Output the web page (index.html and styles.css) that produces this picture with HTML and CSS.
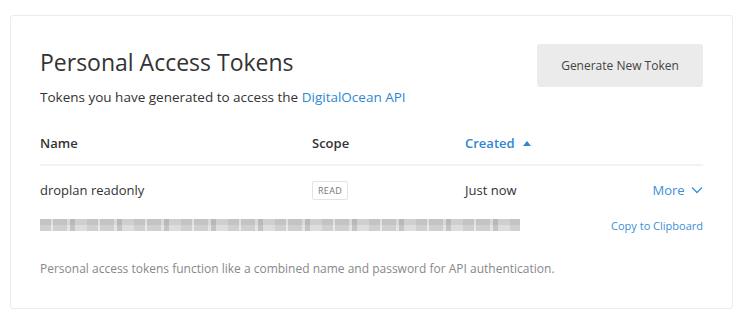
FILE: index.html
```html
<!DOCTYPE html>
<html>
<head>
    <title>Personal Access Tokens</title>
    <link rel="stylesheet" href="styles.css">
</head>
<body>
    <div class="card">
        <div class="header">
            <div>
                <h2>Personal Access Tokens</h2>
                <p class="lead">Tokens you have generated to access the <a href="#">DigitalOcean API</a></p>
            </div>
            <button class="generate">Generate New Token</button>
        </div>
        <div class="row head">
            <div>Name</div>
            <div>Scope</div>
            <div class="sorted">Created <span class="caret"></span></div>
            <div></div>
        </div>
        <div class="row token">
            <div>droplan readonly</div>
            <div><span class="badge">READ</span></div>
            <div>Just now</div>
            <div class="more">More
                <svg width="12" height="8" viewBox="0 0 12 8"><path d="M1 1.5 L6 6.5 L11 1.5" fill="none" stroke="#3a8fd6" stroke-width="1.3"/></svg>
            </div>
        </div>
        <div class="secret">
            <div class="blur"></div>
            <a href="#" class="copy">Copy to Clipboard</a>
        </div>
        <p class="note">Personal access tokens function like a combined name and password for API authentication.</p>
    </div>
</body>
</html>
```
FILE: styles.css
```css
body {
    margin: 0;
    padding: 15px 12px 10px 10px;
    font-family: "Open Sans", sans-serif;
    color: #333;
    background: #fff;
}
.card {
    height: 294px;
    box-sizing: border-box;
    border: 1px solid #ebebeb;
    border-radius: 3px;
    padding: 28px 29px 0 29px;
}
a {
    color: #2e87d3;
    text-decoration: none;
}
.header {
    display: flex;
    justify-content: space-between;
    align-items: flex-start;
}
h2 {
    margin: 3px 0 0 0;
    font-size: 23px;
    font-weight: 400;
    line-height: 30px;
    color: #333;
}
.lead {
    margin: 10px 0 0 0;
    font-size: 13.5px;
    line-height: 20px;
    color: #333;
}
.generate {
    width: 166px;
    height: 43px;
    border: none;
    border-radius: 3px;
    background: #ebebeb;
    color: #444;
    font-family: inherit;
    font-size: 12px;
    cursor: pointer;
}
.row {
    display: grid;
    grid-template-columns: 272px 153px 1fr 100px;
    align-items: center;
    font-size: 13px;
}
.head {
    margin-top: 15px;
    height: 42px;
    border-bottom: 2px solid #f2f2f2;
    font-weight: 600;
}
.sorted {
    color: #2e87d3;
}
.caret {
    display: inline-block;
    margin-left: 5px;
    vertical-align: 2px;
    border-left: 4px solid transparent;
    border-right: 4px solid transparent;
    border-bottom: 5px solid #2e87d3;
}
.token {
    height: 48px;
}
.badge {
    display: inline-block;
    border: 1px solid #e3e3e3;
    border-radius: 2px;
    padding: 3px 5px;
    font-size: 9px;
    line-height: 11px;
    letter-spacing: 0.3px;
    color: #777;
}
.more {
    text-align: right;
    color: #3a8fd6;
    font-size: 13px;
}
.more svg {
    margin-left: 3px;
    vertical-align: 1px;
}
.secret {
    display: flex;
    justify-content: space-between;
    align-items: center;
    height: 22px;
}
.blur {
    width: 480px;
    height: 12px;
    background:
        repeating-linear-gradient(90deg, rgba(110,110,110,0.12) 0 11px, rgba(255,255,255,0.35) 11px 13px, rgba(90,90,90,0.1) 13px 27px, rgba(255,255,255,0.2) 27px 30px, rgba(80,80,80,0.18) 30px 35px, rgba(255,255,255,0) 35px 47px),
        linear-gradient(#cfcfcf 0 50%, #dddddd 50% 100%);
}
.copy {
    font-size: 11px;
    color: #3a8fd6;
}
.note {
    margin: 24px 0 0 0;
    font-size: 12px;
    color: #888;
}
```
